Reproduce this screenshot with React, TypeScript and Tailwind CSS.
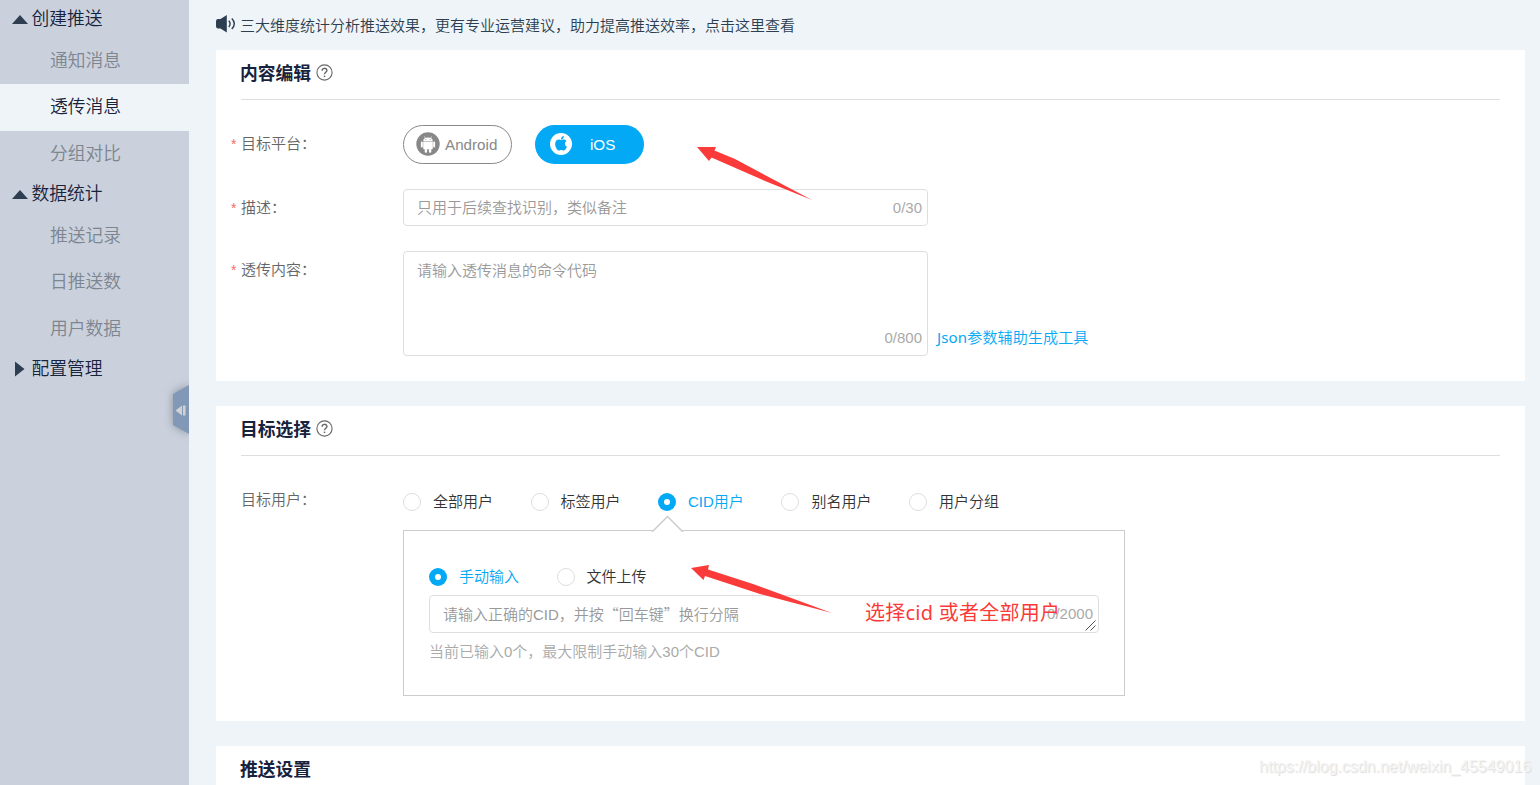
import React from "react";

const cjk = "font-['Noto_Sans_CJK_SC',sans-serif]";

function Caret({ open }: { open: boolean }) {
  return (
    <svg width="16" height="16" viewBox="0 0 16 16" className="mr-1 shrink-0" fill="#2c3e50">
      {open ? <path d="M0 13 L8 4 L16 13 Z" /> : <path d="M3 0.5 L12.5 8 L3 15.5 Z" />}
    </svg>
  );
}

function Group({ label, open = true }: { label: string; open?: boolean }) {
  return (
    <div className="flex h-[35px] items-center pb-px pl-[11.5px] text-[17.8px] text-[#17233d]">
      <Caret open={open} />
      <span>{label}</span>
    </div>
  );
}

function Item({ label, active = false }: { label: string; active?: boolean }) {
  return (
    <div
      className={
        active
          ? "flex h-[47px] items-center bg-[#eff4f9] pl-[50px] text-[17.8px] text-[#17233d]"
          : "flex h-[46.5px] items-center pt-px pl-[50px] text-[17.8px] text-[#7d858f]"
      }
    >
      {label}
    </div>
  );
}

function Sidebar() {
  return (
    <aside className="relative flex w-[189px] shrink-0 flex-col overflow-hidden bg-[#cad1dd] pt-[2px]">
      <Group label="创建推送" />
      <Item label="通知消息" />
      <Item label="透传消息" active />
      <Item label="分组对比" />
      <Group label="数据统计" />
      <Item label="推送记录" />
      <Item label="日推送数" />
      <Item label="用户数据" />
      <Group label="配置管理" open={false} />
      <svg
        className="absolute top-[377px] right-0 drop-shadow-[0_0_4px_rgba(70,80,90,0.5)]"
        width="24"
        height="66"
        viewBox="0 0 24 66"
      >
        <path d="M24 8 L8 17 V48 L24 57 Z" fill="#8298b7" />
        <path d="M10.5 33.5 L17 28.5 V38.5 Z M18 28.5 h2.5 v10 h-2.5 Z" fill="#d0d2d4" />
      </svg>
    </aside>
  );
}

function Help() {
  return (
    <svg width="17" height="17" viewBox="0 0 17 17" fill="none" stroke="#666" strokeWidth="1.1">
      <circle cx="8.5" cy="8.5" r="7.6" />
      <path d="M6.1 6.8 C6.1 3.5 10.9 3.6 10.9 6.5 C10.9 8.4 8.5 8.2 8.5 10.3" strokeWidth="1.4" />
      <path d="M8.5 11.6 v1.5" strokeWidth="1.5" />
    </svg>
  );
}

function Heading({ title, help = true }: { title: string; help?: boolean }) {
  return (
    <div className="mx-[25px] flex h-[50px] items-center gap-[5px] border-b border-[#dcdee2] pb-[3px]">
      <h2 className="-ml-px pt-px text-[17.8px] leading-6 font-bold text-[#17233d]">{title}</h2>
      {help && (
        <span className="mb-px">
          <Help />
        </span>
      )}
    </div>
  );
}

function Label({ text, required = false }: { text: string; required?: boolean }) {
  return (
    <div className="flex h-[37px] w-[172px] shrink-0 items-center text-[15px] text-[#666]">
      <span className="w-[10px] text-[14px] text-[#f56c6c]">{required ? "*" : ""}</span>
      <span>{text}</span>
    </div>
  );
}

function Radio({ label, checked = false }: { label: string; checked?: boolean }) {
  return (
    <div className="flex items-center gap-3">
      <span
        className={
          checked
            ? "flex size-[18px] items-center justify-center rounded-full bg-[#03a9f4]"
            : "size-[18px] rounded-full border border-[#dcdee2] bg-white"
        }
      >
        {checked && <span className="size-[6px] rounded-full bg-white" />}
      </span>
      <span className={checked ? "text-[#03a9f4]" : "text-[#333]"}>{label}</span>
    </div>
  );
}

function AndroidLogo() {
  return (
    <svg width="24" height="24" viewBox="0 0 24 24">
      <circle cx="12" cy="12" r="11.7" fill="#888" />
      <g fill="#fff">
        <path d="M7.2 8.9 C7.4 4.5 16.6 4.5 16.8 8.9 Z" />
        <path d="M7.2 9.5 H16.8 V16.3 Q16.8 17.2 15.9 17.2 H8.1 Q7.2 17.2 7.2 16.3 Z" />
        <rect x="4.9" y="9.5" width="1.9" height="6" rx="0.9" />
        <rect x="17.2" y="9.5" width="1.9" height="6" rx="0.9" />
        <rect x="8.7" y="15.5" width="2.4" height="5.3" rx="1.1" />
        <rect x="12.9" y="15.5" width="2.4" height="5.3" rx="1.1" />
      </g>
      <path d="M8.4 4.4 L9.5 6.3 M15.6 4.4 L14.5 6.3" stroke="#fff" strokeWidth="0.6" />
      <circle cx="9.9" cy="7.5" r="0.5" fill="#888" />
      <circle cx="14.1" cy="7.5" r="0.5" fill="#888" />
    </svg>
  );
}

function AppleLogo() {
  return (
    <svg width="22" height="22" viewBox="0 0 22 22">
      <circle cx="11" cy="11" r="11" fill="#fff" />
      <g fill="#03a9f4" transform="translate(3.8 3.1) scale(0.6)">
        <path d="M12.15 6.9c-.95 0-2.42-1.08-3.96-1.04-2.04.03-3.91 1.18-4.96 3.01-2.12 3.68-.55 9.1 1.52 12.09 1.01 1.45 2.21 3.09 3.79 3.04 1.52-.07 2.09-.99 3.94-.99 1.83 0 2.35.99 3.96.95 1.64-.03 2.68-1.48 3.68-2.95 1.16-1.69 1.64-3.33 1.66-3.42-.04-.01-3.18-1.22-3.22-4.86-.03-3.04 2.48-4.49 2.6-4.56-1.43-2.09-3.62-2.32-4.39-2.38-2-.16-3.68 1.09-4.61 1.09z" />
        <path d="M15.53 3.83C16.37 2.82 16.93 1.4 16.78 0c-1.21.05-2.66.8-3.53 1.82-.78.9-1.45 2.34-1.27 3.71 1.34.1 2.72-.69 3.56-1.7z" />
      </g>
    </svg>
  );
}

function Announcement() {
  return (
    <div className="flex h-[50px] shrink-0 items-center gap-1 text-[15px] text-[#2c3e50]">
      <svg width="20" height="18" viewBox="0 0 20 18" className="mb-[3px]" fill="#2c3e50">
        <path d="M0 6 Q0.2 4.2 2 4 H4.5 L10.8 0 V17.5 L4.5 13.4 H2 Q0.2 13.2 0 11.4 Z" />
        <path
          d="M12.8 5.6 Q15.4 8.8 12.8 12 M15.8 3.6 Q20.8 8.8 15.8 14"
          fill="none"
          stroke="#2c3e50"
          strokeWidth="1.4"
        />
      </svg>
      <span className="mt-px">三大维度统计分析推送效果，更有专业运营建议，助力提高推送效率，点击这里查看</span>
    </div>
  );
}

export default function App() {
  return (
    <div className="relative flex h-[785px] w-[1540px] overflow-hidden bg-[#eff4f8] font-['Liberation_Sans','Noto_Sans_CJK_SC',sans-serif] text-[15px] leading-[22px] font-[350] whitespace-nowrap">
      <Sidebar />
      <main className="flex min-w-0 flex-1 flex-col pr-[15px] pl-[27px]">
        <Announcement />

        <section className="h-[331px] shrink-0 bg-white">
          <Heading title="内容编辑" />
          <div className="flex flex-col gap-[25px] pt-[25px] pl-[15px]">
            <div className="flex h-[39px]">
              <Label text="目标平台：" required />
              <div className="flex gap-[23px]">
                <button className="flex h-[39px] w-[109px] items-center gap-[5px] rounded-full border border-[#888] pl-3 text-[#888]">
                  <span className="mb-[2px]"><AndroidLogo /></span>
                  <span className="text-[15.2px]">Android</span>
                </button>
                <button className="flex h-[39px] w-[109px] items-center gap-[18px] rounded-full bg-[#03a9f4] pl-[15px] text-white">
                  <span className="mb-[2px]"><AppleLogo /></span>
                  <span className="text-[15.2px]">iOS</span>
                </button>
              </div>
            </div>
            <div className="flex h-[37px]">
              <Label text="描述：" required />
              <div className="flex w-[525px] items-center justify-between rounded border border-[#dcdee2] pr-[5px] pl-[13px] text-[#999]">
                <span>只用于后续查找识别，类似备注</span>
                <span className="text-[#aaa]">0/30</span>
              </div>
            </div>
            <div className="flex h-[105px]">
              <Label text="透传内容：" required />
              <div className="flex w-[525px] flex-col justify-between rounded border border-[#dcdee2] pt-2 pr-[5px] pb-[6px] pl-[13px] text-[#999]">
                <span>请输入透传消息的命令代码</span>
                <span className="self-end text-[#aaa]">0/800</span>
              </div>
              <a className="mb-2 ml-[9px] self-end font-['Noto_Sans','Noto_Sans_CJK_SC',sans-serif] tracking-[0.15px] text-[#03a9f4]">
                <span className="font-normal">Json</span>参数辅助生成工具
              </a>
            </div>
          </div>
        </section>

        <section className="mt-[25px] h-[315px] shrink-0 bg-white">
          <Heading title="目标选择" />
          <div className="flex pt-[25px] pl-[15px]">
            <Label text="目标用户：" />
            <div className="flex flex-col">
              <div className="flex h-[41px] items-center gap-[37.5px]">
                <Radio label="全部用户" />
                <Radio label="标签用户" />
                <Radio label="CID用户" checked />
                <Radio label="别名用户" />
                <Radio label="用户分组" />
              </div>
              <div className="relative mt-2 flex h-[166px] w-[722px] flex-col border border-[#ccc] pl-[25px]">
                <svg className="absolute -top-[16px] left-[247px]" width="33" height="18" viewBox="0 0 33 18">
                  <path d="M1 16.5 L16.5 1.5 L32 16.5 V18 H1 Z" fill="#fff" />
                  <path d="M0.5 16 H2 L16.5 1.5 L31 16 H32.5" fill="none" stroke="#ccc" strokeWidth="1.5" />
                </svg>
                <div className="mt-[35px] flex h-[22px] items-center gap-[37.5px]">
                  <Radio label="手动输入" checked />
                  <Radio label="文件上传" />
                </div>
                <div className="relative mt-[7px] flex h-[38px] w-[670px] items-center justify-between rounded border border-[#dcdee2] pr-[5px] pl-[13px] text-[#999]">
                  <span>
                    请输入正确的CID，并按<span className={cjk}>“回车键”</span>换行分隔
                  </span>
                  <span className="text-[#aaa]">0/2000</span>
                  <svg className="absolute right-[2px] bottom-[1px]" width="11" height="11" viewBox="0 0 11 11" stroke="#555">
                    <path d="M0.5 10.5 L10.5 0.5 M5.5 10.5 L10.5 5.5" />
                  </svg>
                </div>
                <div className="mt-[8px] text-[#aaa]">当前已输入0个，最大限制手动输入30个CID</div>
              </div>
            </div>
          </div>
        </section>

        <section className="mt-[25px] h-[60px] shrink-0 bg-white">
          <Heading title="推送设置" help={false} />
        </section>
      </main>

      <svg className="pointer-events-none absolute inset-0" width="1540" height="785" viewBox="0 0 1540 785" fill="#fb3b3a">
        <path d="M697 147 L716 147 L714.5 150.5 L735 159 L812 200 L765 181 L711.5 157.5 L709 161 Z" />
        <path d="M691 568 L709 565 L708 569.5 L753 584 L832 613 L760 594 L705 576 L703.5 580 Z" />
      </svg>
      <div className="pointer-events-none absolute top-[599px] left-[865px] font-['Noto_Sans','Noto_Sans_CJK_SC',sans-serif] text-[20px] leading-7 font-normal tracking-[0.25px] text-[#fb3b3a]">
        选择cid 或者全部用户
      </div>
      <div className="pointer-events-none absolute top-[756px] left-[1259px] text-[16px] font-normal text-[#f4f4f4] [text-shadow:1px_1px_1px_#dadada]">
        https://blog.csdn.net/weixin_45549016
      </div>
    </div>
  );
}
